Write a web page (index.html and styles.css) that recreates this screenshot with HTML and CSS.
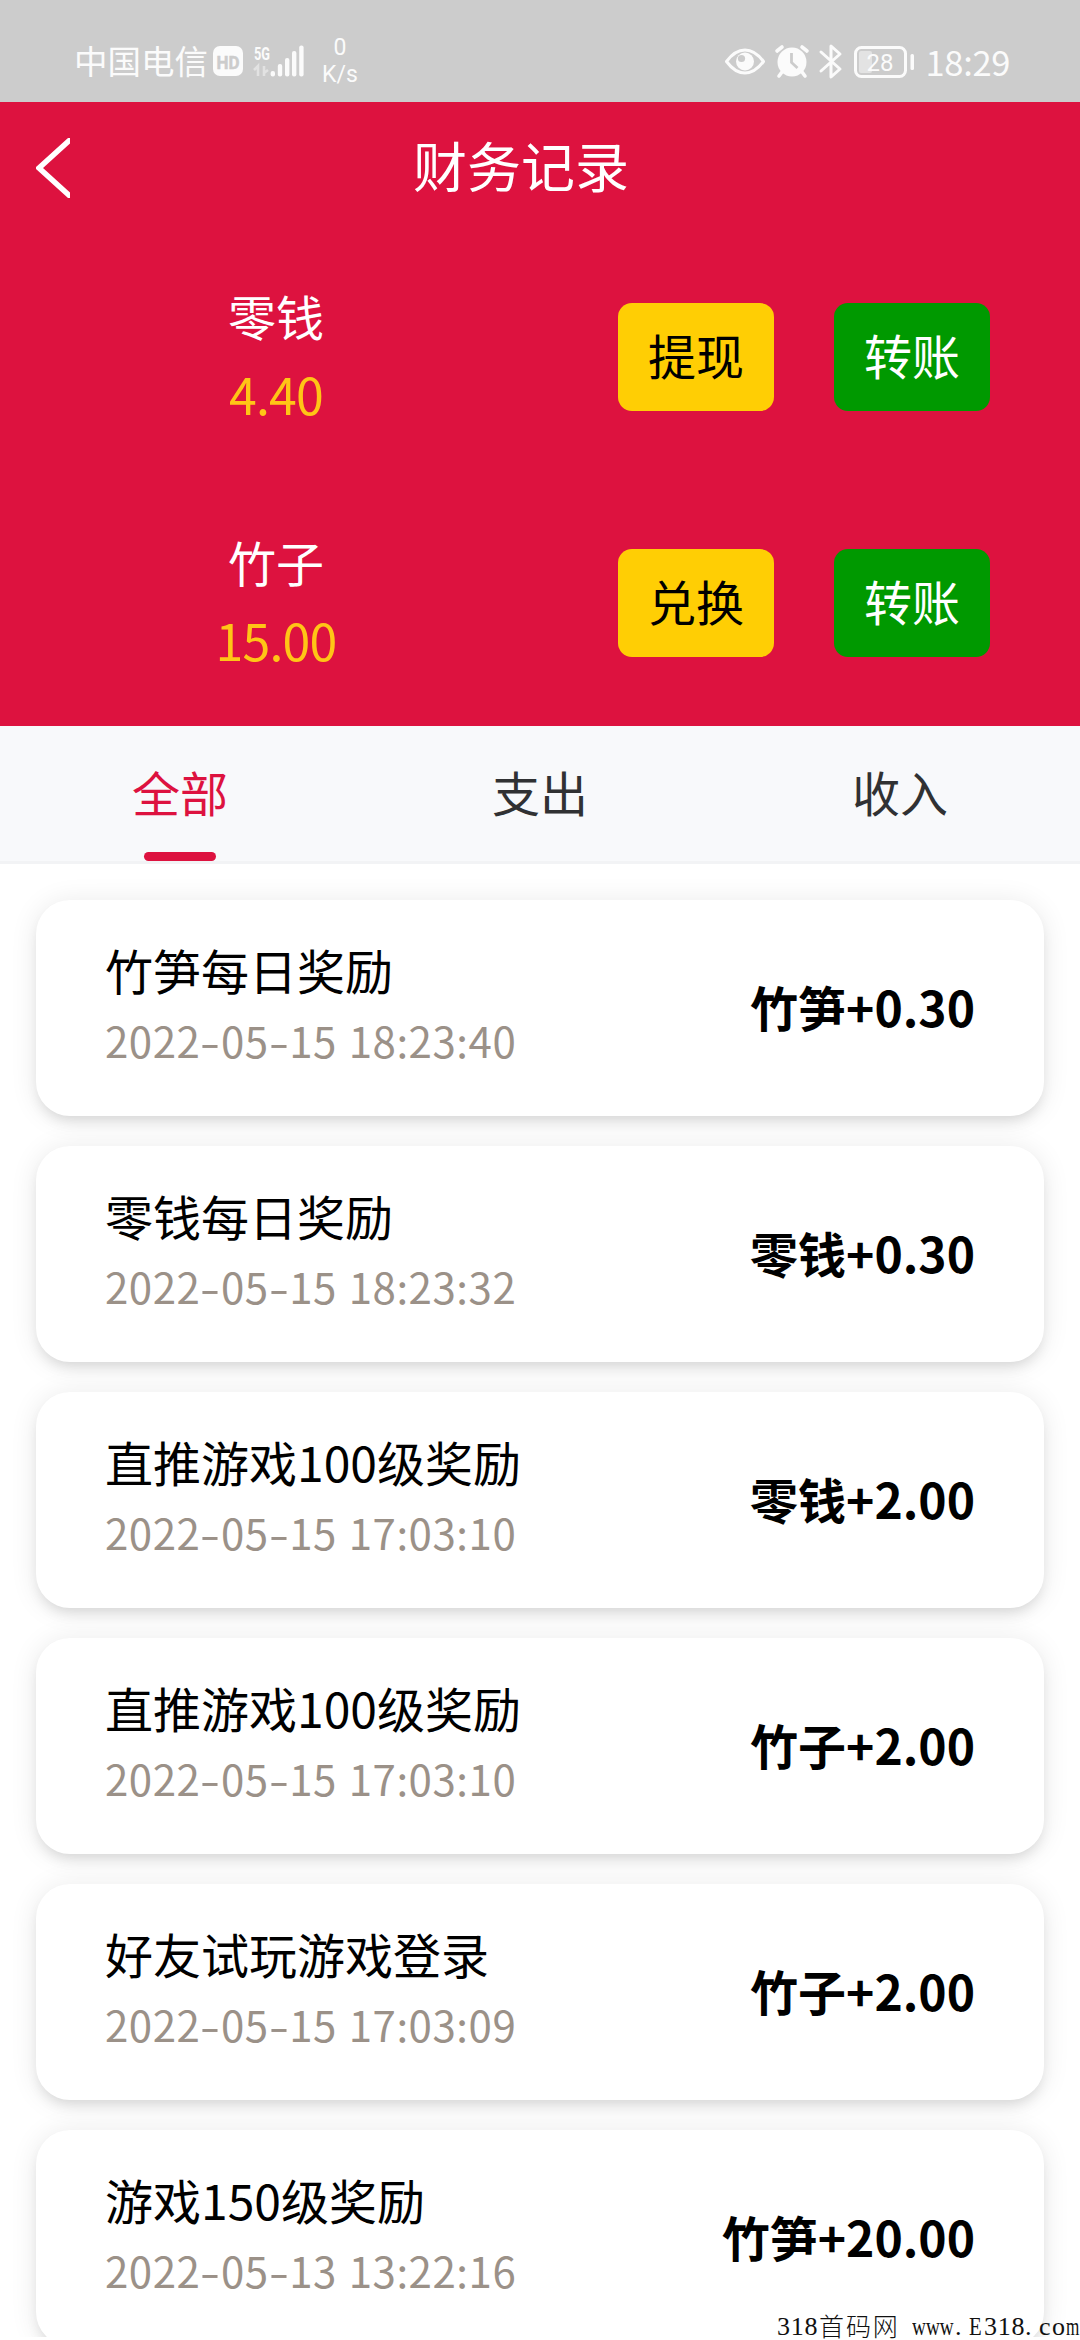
FILE: index.html
```html
<!DOCTYPE html>
<html lang="zh-CN">
<head>
<meta charset="utf-8">
<title>财务记录</title>
<link rel="stylesheet" href="styles.css">
</head>
<body>
<div class="screen">
  <div class="status">
    <span class="carrier">中国电信</span>
    <svg class="signal" width="92" height="40" viewBox="0 0 92 40" fill="#fbfbfb">
      <rect x="1" y="4" width="30" height="30" rx="7"/>
      <text x="16" y="26.500" text-anchor="middle" class="hd" textLength="23" lengthAdjust="spacingAndGlyphs">HD</text>
      <text x="42" y="17.500" class="fiveg" textLength="16" lengthAdjust="spacingAndGlyphs">5G</text>
      <path d="M42 28l4-4v10M52 24v10M52 31l4-3" fill="none" stroke="#e2e2e2" stroke-width="2.6"/>
      <rect x="58.6" y="29" width="4.4" height="5.5" rx="2"/>
      <rect x="65.8" y="22" width="4.4" height="12.5" rx="2"/>
      <rect x="73" y="16" width="4.4" height="18.5" rx="2"/>
      <rect x="80" y="9" width="4.4" height="25.5" rx="2"/>
      <rect x="87.2" y="3.5" width="4.4" height="31" rx="2"/>
    </svg>
    <div class="speed"><span>0</span><span>K/s</span></div>
    <svg class="sysicons" width="190" height="40" viewBox="0 0 190 40" fill="none" stroke="#fbfbfb">
      <path d="M2.500 19.500Q11 8 21 8T39.500 19.500Q31 31 21 31T2.500 19.500z" stroke-width="3" stroke-linejoin="round"/>
      <circle cx="21" cy="19.500" r="9" fill="#fbfbfb" stroke="none"/>
      <circle cx="17.500" cy="16.500" r="3.600" fill="#ccc" stroke="none"/>
      <circle cx="68" cy="20" r="14.500" fill="#fbfbfb" stroke="none"/>
      <path d="M53 9l5-4M83 9l-5-4M58 30l-3 4M78 30l3 4" stroke-width="3.600" stroke-linecap="round"/>
      <path d="M67.500 11v9.500l6 5.500" stroke="#ccc" stroke-width="2.800"/>
      <path d="M97 10l19 17-9 8V4l9 8-19 17" stroke-width="3" stroke-linejoin="round" stroke-linecap="round"/>
      <rect x="131.500" y="5.500" width="50" height="29" rx="6" stroke-width="3"/>
      <rect x="135" y="9" width="13" height="22" rx="2" fill="#e3e3e3" stroke="none"/>
      <text x="156" y="28.500" text-anchor="middle" class="bat">28</text>
      <rect x="186.500" y="12" width="3.500" height="16" rx="1.500" fill="#fbfbfb" stroke="none"/>
    </svg>
    <span class="clock">18:29</span>
  </div>

  <header class="head">
    <div class="navbar">
      <svg class="back" width="34" height="60" viewBox="0 0 34 60"><path d="M35 1L3 30l32 29" fill="none" stroke="#fff" stroke-width="5.500"/></svg>
      <h1 class="title">财务记录</h1>
    </div>
    <div class="wallet">
      <div class="balance"><span class="name">零钱</span><span class="num">4.40</span></div>
      <button class="btn gold">提现</button>
      <button class="btn green">转账</button>
    </div>
    <div class="wallet">
      <div class="balance"><span class="name">竹子</span><span class="num">15.00</span></div>
      <button class="btn gold">兑换</button>
      <button class="btn green">转账</button>
    </div>
  </header>

  <nav class="tabs">
    <div class="tab active">全部</div>
    <div class="tab">支出</div>
    <div class="tab">收入</div>
  </nav>

  <main class="list">
    <div class="card"><div class="info"><div class="what">竹笋每日奖励</div><div class="when">2022<i>-</i>05<i>-</i>15 18:23:40</div></div><div class="amount">竹笋+0.30</div></div>
    <div class="card"><div class="info"><div class="what">零钱每日奖励</div><div class="when">2022<i>-</i>05<i>-</i>15 18:23:32</div></div><div class="amount">零钱+0.30</div></div>
    <div class="card"><div class="info"><div class="what">直推游戏100级奖励</div><div class="when">2022<i>-</i>05<i>-</i>15 17:03:10</div></div><div class="amount">零钱+2.00</div></div>
    <div class="card"><div class="info"><div class="what">直推游戏100级奖励</div><div class="when">2022<i>-</i>05<i>-</i>15 17:03:10</div></div><div class="amount">竹子+2.00</div></div>
    <div class="card"><div class="info"><div class="what">好友试玩游戏登录</div><div class="when">2022<i>-</i>05<i>-</i>15 17:03:09</div></div><div class="amount">竹子+2.00</div></div>
    <div class="card"><div class="info"><div class="what">游戏150级奖励</div><div class="when">2022<i>-</i>05<i>-</i>13 13:22:16</div></div><div class="amount">竹笋+20.00</div></div>
  </main>

  <div class="mark"><span class="n3">318</span><span class="cn">首码网</span><span class="w">www</span><span class="dot">.</span><span class="e">E</span><span class="n3">318</span><span class="dot">.</span><span class="co">co</span><span class="m">m</span></div>
</div>
</body>
</html>
```

FILE: styles.css
```css
* { box-sizing: border-box; }
body { margin: 0; background: #fff; font-family: "Noto Sans CJK SC", sans-serif; }
.screen { position: relative; width: 1080px; height: 2340px; overflow: hidden; display: flex; flex-direction: column; }

/* system bar */
.status { height: 102px; flex: none; background: #ccc; color: #fbfbfb; display: flex; align-items: flex-start; padding: 42px 0 0 74px; }
.carrier { margin-top: -2px; font-size: 33.5px; line-height: 40px; width: 138px; white-space: nowrap; }
.signal { display: block; flex: none; }
.hd { font: bold 19px "Roboto", sans-serif; fill: #ccc; stroke: #ccc; stroke-width: .5px; }
.fiveg { font: bold 19px "Roboto", sans-serif; fill: #fbfbfb; }
.speed { display: flex; flex-direction: column; align-items: center; width: 36px; margin: -8px 0 0 18px; font: 23px/27px "Roboto", sans-serif; }
.sysicons { display: block; flex: none; margin-left: 365.5px; }
.bat { font: 24px "Roboto", sans-serif; fill: #fbfbfb; stroke: none; }
.clock { margin: -1px 0 0 12px; font-size: 34.5px; line-height: 40px; letter-spacing: -.3px; white-space: nowrap; }

/* red header */
.head { height: 624px; flex: none; background: #dd123f; color: #fff; }
.navbar { height: 132px; display: flex; align-items: center; padding-left: 36px; }
.back { display: block; }
.title { margin: 0 0 0 343px; padding-bottom: 6px; font-size: 54px; font-weight: 400; line-height: 80px; }
.wallet { height: 246px; display: flex; align-items: center; gap: 60px; padding: 0 90px 0 66px; }
.balance { width: 420px; flex: none; display: flex; flex-direction: column; align-items: center; margin-right: 72px; padding-bottom: 6px; }
.name { font-size: 48px; line-height: 78px; }
.num { font-size: 50px; line-height: 78px; letter-spacing: -.8px; color: #ffc516; }
.wallet .gold { margin-left: -60px; }
.balance { margin-right: 132px; }
.btn { width: 156px; height: 108px; flex: none; border: 0; border-radius: 14px; padding: 0 0 6px; font: 48px/70px "Noto Sans CJK SC", sans-serif; }
.gold { background: #ffce04; color: #000; }
.green { background: #009900; color: #fff; }

/* tabs */
.tabs { height: 138px; flex: none; display: flex; background: #f8f9fb; border-bottom: 3px solid #f2f3f5; }
.tab { flex: 1; display: flex; flex-direction: column; align-items: center; padding-top: 30px; font-size: 48px; line-height: 70px; color: #303133; }
.active { color: #dd123f; }
.active::after { content: ""; width: 72px; height: 9px; margin-top: 26px; border-radius: 4.5px; background: #dd123f; }

/* records */
.list { height: 1473px; flex: none; overflow: hidden; display: flex; flex-direction: column; gap: 30px; padding: 36px 36px 0; }
.card { height: 216px; flex: none; display: flex; justify-content: space-between; align-items: center; padding: 0 69px 0 69px; border-radius: 34px; background: #fff; box-shadow: 0 2px 28px rgba(0,0,0,.09), 0 8px 14px -4px rgba(0,0,0,.12); }
.info { padding-bottom: 6px; }
.what { font-size: 48px; line-height: 70px; color: #000; margin-top: -1px; }
.when { margin-top: 1px; font-size: 42px; line-height: 70px; color: #9b9188; letter-spacing: .55px; word-spacing: 1.8px; white-space: nowrap; }
.when i { display: inline-block; width: 20.5px; text-align: center; font-style: normal; transform: scaleX(1.4); }
.amount { padding-bottom: 4px; font-size: 48px; line-height: 70px; font-weight: 700; color: #000; }

/* corner site mark */
.mark { position: absolute; left: 777px; top: 2315px; height: 24px; display: flex; align-items: flex-start; font: 26px/24px "Liberation Serif", serif; letter-spacing: .7px; color: #111; white-space: nowrap; }
.mark span { flex: none; }
.n3 { width: 41px; }
.cn { width: 94px; margin-top: -2px; padding-left: 1px; font: 300 25px/24px "Noto Sans CJK SC", sans-serif; letter-spacing: 1.9px; }
.w { width: 43px; letter-spacing: 0; }
.dot { width: 14px; }
.e { width: 15px; }
.co { width: 27px; letter-spacing: 1.5px; }
.m { width: 14px; letter-spacing: 0; }
.w, .e, .m { transform-origin: left; }
.w { transform: scaleX(.74); }
.e { transform: scaleX(.8); }
.m { transform: scaleX(.66); }
```
